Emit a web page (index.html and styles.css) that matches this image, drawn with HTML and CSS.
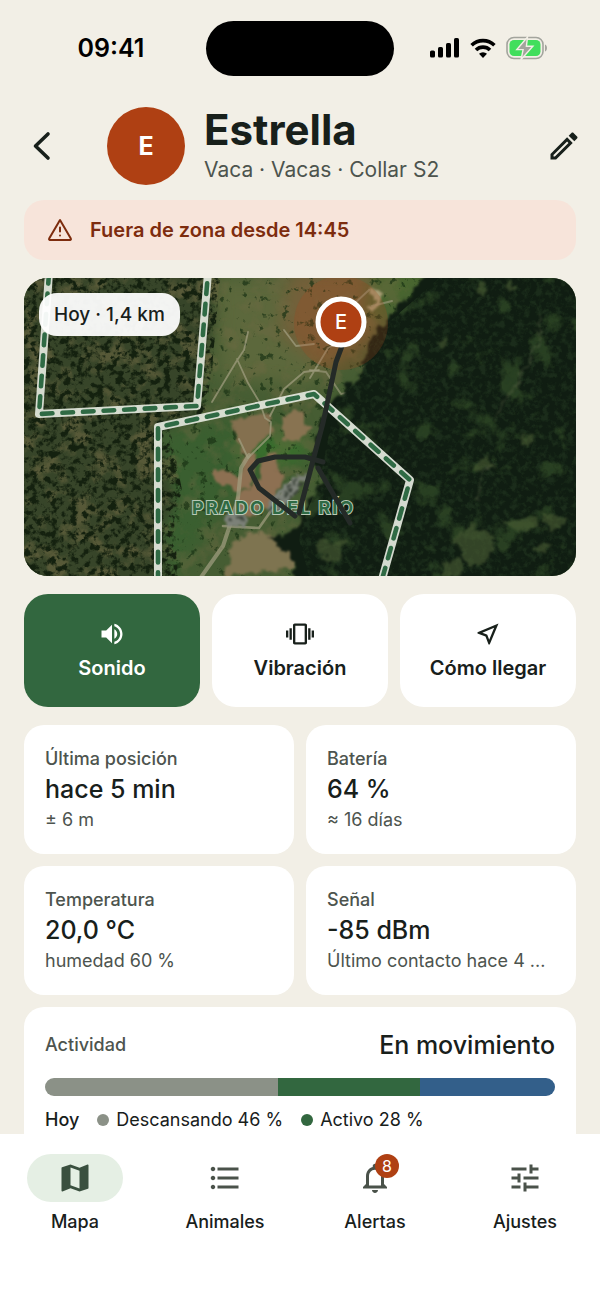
FILE: index.html
```html
<!DOCTYPE html>
<html lang="es">
<head>
    <meta charset="UTF-8">
    <meta name="viewport" content="width=device-width, initial-scale=1.0">
    <title>Estrella</title>
    <link rel="stylesheet" href="styles.css">
</head>
<body>
    <div class="status-bar">
        <span class="time">09:41</span>
        <div class="island"></div>
        <div class="status-icons">
            <svg width="30" height="20" viewBox="0 0 30 20" fill="#000">
                <rect x="0" y="12.5" width="5" height="7" rx="1.6"/>
                <rect x="8" y="9" width="5" height="10.5" rx="1.6"/>
                <rect x="16" y="5" width="5" height="14.5" rx="1.6"/>
                <rect x="24" y="0" width="5" height="19.5" rx="1.6"/>
            </svg>
            <svg width="26" height="20" viewBox="0 0 26 20" fill="none" stroke="#000" stroke-width="3.6">
                <path d="M1.6 7.2a16.4 16.4 0 0 1 22.8 0"/>
                <path d="M6 12a10 10 0 0 1 14 0"/>
                <path d="M13 20l-4-4.2a5.8 5.8 0 0 1 8 0z" fill="#000" stroke="none"/>
            </svg>
            <svg width="42" height="24" viewBox="0 0 42 24">
                <rect x="1" y="1.5" width="36" height="21" rx="7" fill="none" stroke="#a3a49d" stroke-width="1.6"/>
                <path d="M39 8.5c2.6.8 2.6 6.2 0 7z" fill="#a3a49d"/>
                <rect x="3.5" y="4" width="31" height="16" rx="4.5" fill="#41de5c"/>
                <path d="M21.5 1L10.800 13.600h6.300l-2 9.900 11.800-13.200h-6.500z" fill="#a3a49d" stroke="#f2efe6" stroke-width="1.4"/>
            </svg>
        </div>
    </div>

    <main class="content">
        <header class="header">
            <button class="icon-button" aria-label="Atrás">
                <svg width="36" height="36" viewBox="0 0 36 36" fill="none" stroke="#18201b" stroke-width="3.6" stroke-linecap="round" stroke-linejoin="round"><path d="M24 6L11.5 18l12.500 12"/></svg>
            </button>
            <div class="avatar">E</div>
            <div class="title">
                <h1>Estrella</h1>
                <p>Vaca · Vacas · Collar S2</p>
            </div>
            <button class="icon-button" aria-label="Editar">
                <svg width="36" height="36" viewBox="0 0 24 24" fill="#18201b"><path d="M14.06 9.02l.92.92L5.92 19H5v-.92l9.06-9.06M17.66 3c-.25 0-.51.1-.7.29l-1.83 1.83 3.75 3.75 1.83-1.83c.39-.39.39-1.02 0-1.41l-2.34-2.34c-.2-.2-.45-.29-.71-.29zm-3.6 3.19L3 17.25V21h3.75L17.81 9.94l-3.75-3.75z"/></svg>
            </button>
        </header>

        <div class="alert" role="alert">
            <svg width="24" height="24" viewBox="0 0 24 24" fill="none" stroke="#7d2c0e" stroke-width="2" stroke-linecap="round" stroke-linejoin="round"><path d="M12 2L1.2 20.6a.9.9 0 0 0 .8 1.4h20a.9.9 0 0 0 .8-1.4z"/><path d="M12 9.5v4M12 17.5v.1"/></svg>
            <span>Fuera de zona desde 14:45</span>
        </div>

        <div class="map">
            <svg class="map-view" viewBox="0 0 552 298" preserveAspectRatio="xMidYMid slice">
                <defs>
                    <!-- bordes irregulares -->
                    <filter id="rough" x="-10%" y="-10%" width="120%" height="120%" color-interpolation-filters="sRGB">
                        <feTurbulence type="fractalNoise" baseFrequency="0.09" numOctaves="4" seed="4"/>
                        <feDisplacementMap in="SourceGraphic" scale="14" xChannelSelector="R" yChannelSelector="G"/>
                        <feGaussianBlur stdDeviation="1"/>
                    </filter>
                    <!-- copas de los árboles -->
                    <filter id="trees" x="0" y="0" width="100%" height="100%" color-interpolation-filters="sRGB">
                        <feTurbulence type="fractalNoise" baseFrequency="0.15" numOctaves="4" seed="11"/>
                        <feColorMatrix values="0 0 0 0 .08  0 0 0 0 .13  0 0 0 0 .06  4 3 0 0 -3.3"/>
                        <feComposite in2="SourceGraphic" operator="in"/>
                    </filter>
                    <filter id="scrub" x="0" y="0" width="100%" height="100%" color-interpolation-filters="sRGB">
                        <feTurbulence type="fractalNoise" baseFrequency="0.045" numOctaves="5" seed="7"/>
                        <feColorMatrix values="0 0 0 0 .45  0 0 0 0 .42  0 0 0 0 .27  4 0 2 0 -2.9"/>
                        <feComposite in2="SourceGraphic" operator="in"/>
                    </filter>
                    <filter id="canopy" x="0" y="0" width="100%" height="100%" color-interpolation-filters="sRGB">
                        <feTurbulence type="fractalNoise" baseFrequency="0.16" numOctaves="4" seed="21"/>
                        <feColorMatrix values="0 0 0 0 .15  0 0 0 0 .24  0 0 0 0 .14  3 2 0 0 -2.3"/>
                        <feComposite in2="SourceGraphic" operator="in"/>
                    </filter>
                    <filter id="bushes" x="0" y="0" width="100%" height="100%" color-interpolation-filters="sRGB">
                        <feTurbulence type="fractalNoise" baseFrequency="0.12" numOctaves="4" seed="33"/>
                        <feColorMatrix values="0 0 0 0 .10  0 0 0 0 .20  0 0 0 0 .08  9 0 0 0 -5.7"/>
                        <feComposite in2="SourceGraphic" operator="in"/>
                    </filter>
                    <filter id="clearings" x="0" y="0" width="100%" height="100%" color-interpolation-filters="sRGB">
                        <feTurbulence type="fractalNoise" baseFrequency="0.03" numOctaves="5" seed="52"/>
                        <feColorMatrix values="0 0 0 0 .22  0 0 0 0 .33  0 0 0 0 .17  0 7 0 0 -4"/>
                        <feComposite in2="SourceGraphic" operator="in"/>
                    </filter>
                    <filter id="soft" color-interpolation-filters="sRGB"><feGaussianBlur stdDeviation="9"/></filter>
                    <filter id="edge" color-interpolation-filters="sRGB"><feGaussianBlur stdDeviation="5"/></filter>
                </defs>

                <!-- praderas -->
                <rect width="552" height="298" fill="#465d33"/>
                <g filter="url(#soft)">
                    <path d="M190 0h210l-55 60-60 50-90-10z" fill="#5c683c"/>
                    <path d="M265 -10h90l-5 70-50 30-45-35z" fill="#74603a"/>
                    <path d="M350 -10h70l-60 50h-20z" fill="#49672f"/>
                    <path d="M140 150l70-10 60 5 10 45-60 20-70 90h-30z" fill="#3a5f30"/>
                    <ellipse cx="250" cy="172" rx="36" ry="14" fill="#39702d"/>
                </g>
                <rect x="130" width="290" height="298" filter="url(#scrub)" opacity=".35"/>
                <rect x="130" width="290" height="298" filter="url(#bushes)" opacity=".7"/>

                <!-- parcelas aradas -->
                <g filter="url(#rough)">
                    <path d="M206 143l37-7 8 16-29 26-6-14z" fill="#84704f"/>
                    <path d="M262 137l16-4 10 18-12 12-18-4z" fill="#887351"/>
                    <path d="M192 190l24 8 5-20 12-5-8 36-14 5-20-12zM239 178l12-4 2 18 8 5-12 30-31 12-10-10 10-15 21-13z" fill="#8d7052"/>
                    <path d="M206 263l18-9 32 4 20 16-10 18-62 6z" fill="#7e7450"/>
                </g>

                <!-- caminos -->
                <g fill="none" stroke="#a29f82" stroke-linecap="round" stroke-linejoin="round">
                    <path d="M224 54l-4 18-8 12-24 40M213 81l11 24 12 20 5 15 6 4-1 14-22 22-9-19M246 138l14-27 20-17 15-2M260 52l12 16 18-2M286 100l18-30 23-12" stroke-width="1.8" opacity=".7"/>
                    <path d="M225 177l-8 13-3 30-5 18-10 30-24 34" stroke-width="4" opacity=".7"/>
                    <path d="M199 248l36 2 32-46" stroke-width="2.6" opacity=".7"/>
                    <path d="M345 12l-28 26-8 30M348 28l20-5M286 92l16 2 15 22 26-5" stroke-width="2" opacity=".6"/>
                </g>
                <g filter="url(#rough)" stroke-linecap="round">
                    <path d="M202 235l14-4 9 12-6 8-18-3zM242 228l26-28 14-3-12 22-23 17z" fill="#7c8178"/>
                    <path d="M247 232l25-30M253 235l25-29M206 240l15 3" stroke="#3a4238" stroke-width="3" stroke-dasharray="3 6"/>
                    <path d="M347 13l10 7-10 8" stroke="#a89d75" stroke-width="6" fill="none"/>
                </g>

                <!-- bosque oeste -->
                <path d="M-20 -20H188l2 60-11 55-8 45-38 13 18 70-12 30 6 65H-20z" fill="#374529" filter="url(#edge)"/>
                <path d="M0 0H196l-10 90-5 46-35 16 12 60-8 30 4 56H0z" filter="url(#scrub)" opacity=".55"/>
                <path d="M0 0H196l-8 90-7 46-35 16 12 60-8 30 4 56H0z" filter="url(#trees)"/>

                <!-- bosque este -->
                <g filter="url(#rough)">
                    <path d="M420 -20l-25 25-32 36-16 20-12 38-30 25-12 30-5 28 14 18-18 20-8 30-32 10 22 16 10 40H580V-20z" fill="#101d12"/>
                </g>
                <path d="M415 0l-18 16-32 28-18 20-10 35-25 22-8 40-8 40-16 40-5 20 10 37H552V0z" filter="url(#clearings)" opacity=".65"/>
                <path d="M415 0l-18 16-32 28-18 20-10 35-25 22-8 40-8 40-16 40-5 20 10 37H552V0z" filter="url(#canopy)" opacity=".5"/>
                <g filter="url(#rough)" fill="#4b5e35" opacity=".6">
                    <path d="M430 260l16-14 26 14-10 24-16 5zM478 245l30-7 10 10-24 7zM515 236l30 3-20 15zM510 268l18-5-8 14zM450 185l12-8 8 12-18 5zM412 63l8-5 3 8-8 4zM480 6l6-8 5 14-7 4zM295 263l26 2-8 17-22-7zM417 285l20-3 4 16h-22zM499 155l13 2-5 14-10-5zM450 10l10-5 3 12z"/>
                </g>
                <path d="M516 35l-3 30-18 38-14 18-12 25M468 183l-10 20-4 20" fill="none" stroke="#586345" stroke-width="1.6" opacity=".6" filter="url(#rough)"/>

                <!-- zona de precisión -->
                <circle cx="317" cy="45" r="47" fill="#a6481c" opacity=".24"/>

                <!-- cercados -->
                <g fill="none" stroke-linejoin="round">
                    <g stroke="#dfe5da" stroke-width="8" opacity=".95">
                        <path d="M25 -5L15 136l158-8L184 -5"/>
                        <path d="M134 305V149l156-33 96 86-29 103"/>
                    </g>
                    <g stroke="#2f6a44" stroke-width="4.600" stroke-linecap="round" stroke-dasharray="10.600 10">
                        <path d="M25 -5L15 136l158-8L184 -5"/>
                        <path d="M134 305V149l156-33 96 86-29 103"/>
                    </g>
                </g>

                <text class="zone-name" x="168" y="236">PRADO DEL RÍO</text>

                <g fill="none" stroke="#242a27" stroke-width="5" stroke-linecap="round" stroke-linejoin="round">
                    <path d="M318 68l-6 16-13 61-12 45-12 45"/>
                    <path d="M299 184l-18-5h-30l-17 4-8 9 9 18 36 28M294 190l32 55"/>
                </g>
                <circle cx="317" cy="44" r="23" fill="#af4013" stroke="#fff" stroke-width="5"/>
                <text class="marker-text" x="317" y="51">E</text>
            </svg>
            <span class="distance">Hoy · 1,4 km</span>
        </div>

        <div class="actions">
            <button class="action active">
                <svg width="28" height="28" viewBox="0 0 24 24"><path d="M3 9v6h4l5 5V4L7 9H3zm13.500 3c0-1.770-1.020-3.290-2.500-4.030v8.050c1.480-.73 2.500-2.250 2.500-4.020zM14 3.230v2.060c2.890.86 5 3.540 5 6.710s-2.110 5.850-5 6.710v2.060c4.010-.91 7-4.490 7-8.770s-2.990-7.860-7-8.770z"/></svg>
                Sonido
            </button>
            <button class="action">
                <svg width="28" height="28" viewBox="0 0 24 24"><path d="M0 15h2V9H0v6zm3 2h2V7H3v10zm19-8v6h2V9h-2zm-3 8h2V7h-2v10zM16.500 3h-9C6.670 3 6 3.670 6 4.500v15c0 .83.67 1.500 1.500 1.500h9c.83 0 1.500-.67 1.500-1.500v-15c0-.83-.67-1.500-1.500-1.500zM16 19H8V5h8v14z"/></svg>
                Vibración
            </button>
            <button class="action">
                <svg width="28" height="28" viewBox="0 0 24 24"><path d="M17.270 6.730l-4.240 10.130-1.320-3.420-.32-.83-.82-.32-3.430-1.330 10.130-4.230M21 3L3 10.530v.98l6.840 2.650L12.480 21h.98L21 3z"/></svg>
                Cómo llegar
            </button>
        </div>

        <div class="stats">
            <section class="card">
                <h2>Última posición</h2>
                <p class="value">hace 5 min</p>
                <p class="note">± 6 m</p>
            </section>
            <section class="card">
                <h2>Batería</h2>
                <p class="value">64 %</p>
                <p class="note">≈ 16 días</p>
            </section>
            <section class="card">
                <h2>Temperatura</h2>
                <p class="value">20,0 °C</p>
                <p class="note">humedad 60 %</p>
            </section>
            <section class="card">
                <h2>Señal</h2>
                <p class="value">-85 dBm</p>
                <p class="note">Último contacto hace 4 ...</p>
            </section>
        </div>

        <section class="card activity">
            <div class="activity-head">
                <h2>Actividad</h2>
                <p class="value">En movimiento</p>
            </div>
            <div class="bar">
                <div class="rest" style="width: 45.6%"></div>
                <div class="walk" style="width: 28%"></div>
                <div class="graze"></div>
            </div>
            <div class="legend">
                <strong>Hoy</strong>
                <span><i class="dot rest"></i>Descansando 46 %</span>
                <span><i class="dot walk"></i>Activo 28 %</span>
            </div>
        </section>
    </main>

    <nav class="tabs">
        <a href="#" class="tab selected">
            <span class="tab-icon"><svg width="36" height="36" viewBox="0 0 24 24"><path d="M20.500 3l-.16.03L15 5.100 9 3 3.360 4.900c-.21.07-.36.25-.36.48V20.500c0 .28.22.5.5.5l.16-.03L9 18.900l6 2.100 5.640-1.900c.21-.07.36-.25.36-.48V3.500c0-.28-.22-.5-.5-.5zM15 19l-6-2.110V5l6 2.110V19z"/></svg></span>
            Mapa
        </a>
        <a href="#" class="tab">
            <span class="tab-icon"><svg width="36" height="36" viewBox="0 0 24 24"><path d="M4 10.500c-.83 0-1.500.67-1.500 1.500s.67 1.500 1.500 1.500 1.500-.67 1.500-1.500-.67-1.500-1.500-1.500zm0-6c-.83 0-1.500.67-1.500 1.500S3.170 7.500 4 7.500 5.500 6.830 5.500 6 4.830 4.500 4 4.500zm0 12c-.83 0-1.500.68-1.500 1.500s.68 1.500 1.500 1.500 1.500-.68 1.500-1.500-.67-1.500-1.500-1.500zM7 19h14v-2H7v2zm0-6h14v-2H7v2zm0-8v2h14V5H7z"/></svg></span>
            Animales
        </a>
        <a href="#" class="tab">
            <span class="tab-icon"><svg width="36" height="36" viewBox="0 0 24 24"><path d="M12 22c1.100 0 2-.9 2-2h-4c0 1.100.9 2 2 2zm6-6v-5c0-3.070-1.630-5.640-4.500-6.320V4c0-.83-.67-1.500-1.500-1.500s-1.500.67-1.500 1.500v.68C7.640 5.360 6 7.920 6 11v5l-2 2v1h16v-1l-2-2zm-2 1H8v-6c0-2.480 1.510-4.500 4-4.500s4 2.020 4 4.500v6z"/></svg><b class="badge">8</b></span>
            Alertas
        </a>
        <a href="#" class="tab">
            <span class="tab-icon"><svg width="36" height="36" viewBox="0 0 24 24"><path d="M3 17v2h6v-2H3zM3 5v2h10V5H3zm10 16v-2h8v-2h-8v-2h-2v6h2zM7 9v2H3v2h4v2h2V9H7zm14 4v-2H11v2h10zm-6-4h2V7h4V5h-4V3h-2v6z"/></svg></span>
            Ajustes
        </a>
    </nav>
</body>
</html>
```
FILE: styles.css
```css
:root {
    --bg: #f2efe6;
    --ink: #18201b;
    --muted: #4d544e;
    --green: #32673f;
    --orange: #af4013;
    --rest: #8b9187;
    --blue: #335f8a;
    --radius: 20px;
}

* {
    box-sizing: border-box;
    margin: 0;
    padding: 0;
}

body {
    height: 100vh;
    display: flex;
    flex-direction: column;
    font-family: Inter, "Liberation Sans", sans-serif;
    color: var(--ink);
    background: var(--bg);
}

button {
    font: inherit;
    color: inherit;
    border: none;
    background: none;
    cursor: pointer;
}

svg {
    display: block;
}

/* barra de estado */
.status-bar {
    display: grid;
    grid-template-columns: 1fr 188px 1fr;
    align-items: center;
    height: 96px;
    flex: none;
}

.time {
    padding-left: 16px;
    text-align: center;
    font-size: 25px;
    font-weight: 600;
    color: #000;
}

.island {
    height: 55px;
    border-radius: 28px;
    background: #000;
}

.status-icons {
    display: flex;
    align-items: center;
    justify-content: center;
    gap: 10px;
    padding-right: 16px;
}

.content {
    flex: 1;
    min-height: 0;
    overflow: hidden;
    padding: 11px 24px 0;
}

.header {
    display: flex;
    align-items: center;
    height: 78px;
    margin-bottom: 15px;
}

.icon-button {
    width: 36px;
    height: 36px;
    flex: none;
}

.header .icon-button:last-child {
    margin-right: -6px;
}

.avatar {
    width: 78px;
    height: 78px;
    margin: 0 19px 0 47px;
    flex: none;
    border-radius: 50%;
    background: var(--orange);
    color: #fff;
    font-size: 25px;
    font-weight: 700;
    line-height: 78px;
    text-align: center;
}

.title {
    flex: 1;
}

h1 {
    font-size: 42px;
    line-height: 48px;
    font-weight: 700;
}

.title p {
    font-size: 21px;
    line-height: 32px;
    color: var(--muted);
}

.alert {
    display: flex;
    align-items: center;
    gap: 18px;
    height: 60px;
    padding: 0 24px;
    margin-bottom: 18px;
    border-radius: var(--radius);
    background: #f7e4da;
    color: #7d2c0e;
    font-size: 20px;
    font-weight: 600;
}

/* mapa */
.map {
    position: relative;
    aspect-ratio: 552 / 298;
    margin-bottom: 18px;
    border-radius: 24px;
    overflow: hidden;
}

.map-view {
    width: 100%;
    height: 100%;
}

.zone-name {
    font-size: 18px;
    font-weight: 700;
    letter-spacing: 2px;
    fill: #2f6a44;
    stroke: #b9c9b6;
    stroke-width: 2px;
    paint-order: stroke;
}

.marker-text {
    font-size: 20px;
    font-weight: 500;
    fill: #fff;
    text-anchor: middle;
}

.distance {
    position: absolute;
    top: 15px;
    left: 15px;
    padding: 0 15px;
    border-radius: 18px;
    background: rgba(255, 255, 255, 0.94);
    font-size: 19px;
    font-weight: 500;
    line-height: 43px;
}

/* acciones */
.actions {
    display: grid;
    grid-template-columns: repeat(3, 1fr);
    gap: 12px;
    margin-bottom: 18px;
}

.action {
    display: flex;
    flex-direction: column;
    align-items: center;
    gap: 8px;
    padding: 26px 0;
    border-radius: 24px;
    background: #fff;
    font-size: 20px;
    font-weight: 600;
    line-height: 25px;
    white-space: nowrap;
}

.action svg {
    fill: currentColor;
}

.action.active {
    background: var(--green);
    color: #fff;
}

/* tarjetas */
.stats {
    display: grid;
    grid-template-columns: repeat(2, 1fr);
    gap: 12px;
    margin-bottom: 12px;
}

.card {
    min-width: 0;
    padding: 21px;
    border-radius: var(--radius);
    background: #fff;
}

.card h2 {
    font-size: 18px;
    font-weight: 500;
    line-height: 26px;
    color: var(--muted);
}

.value {
    font-size: 25px;
    font-weight: 500;
    line-height: 34px;
}

.note {
    font-size: 18px;
    line-height: 27px;
    color: var(--muted);
    white-space: nowrap;
}

.activity-head {
    display: flex;
    align-items: center;
    justify-content: space-between;
    margin-bottom: 16px;
}

.bar {
    display: flex;
    height: 18px;
    margin-bottom: 12px;
    border-radius: 9px;
    overflow: hidden;
}

.graze {
    flex: 1;
    background: var(--blue);
}

.rest {
    background: var(--rest);
}

.walk {
    background: var(--green);
}

.legend {
    display: flex;
    gap: 18px;
    font-size: 18px;
    line-height: 24px;
}

.legend strong {
    font-weight: 500;
}

.legend span {
    display: flex;
    align-items: center;
    gap: 7px;
}

.dot {
    width: 12px;
    height: 12px;
    border-radius: 50%;
}

/* navegación */
.tabs {
    display: grid;
    grid-template-columns: repeat(4, 1fr);
    flex: none;
    height: 170px;
    padding-top: 20px;
    background: #fff;
}

.tab {
    display: flex;
    flex-direction: column;
    align-items: center;
    gap: 8px;
    color: var(--ink);
    font-size: 18px;
    font-weight: 500;
    line-height: 24px;
    text-decoration: none;
}

.tab-icon {
    position: relative;
    padding: 6px 30px;
    border-radius: 24px;
}

.tab-icon svg {
    fill: #4a524a;
}

.selected .tab-icon {
    background: #e5efe4;
}

.selected svg {
    fill: #3a503f;
}

.badge {
    position: absolute;
    top: 0;
    left: 48px;
    width: 24px;
    height: 24px;
    border-radius: 50%;
    background: var(--orange);
    color: #fff;
    font-size: 16px;
    font-weight: 400;
    line-height: 24px;
    text-align: center;
}
```
